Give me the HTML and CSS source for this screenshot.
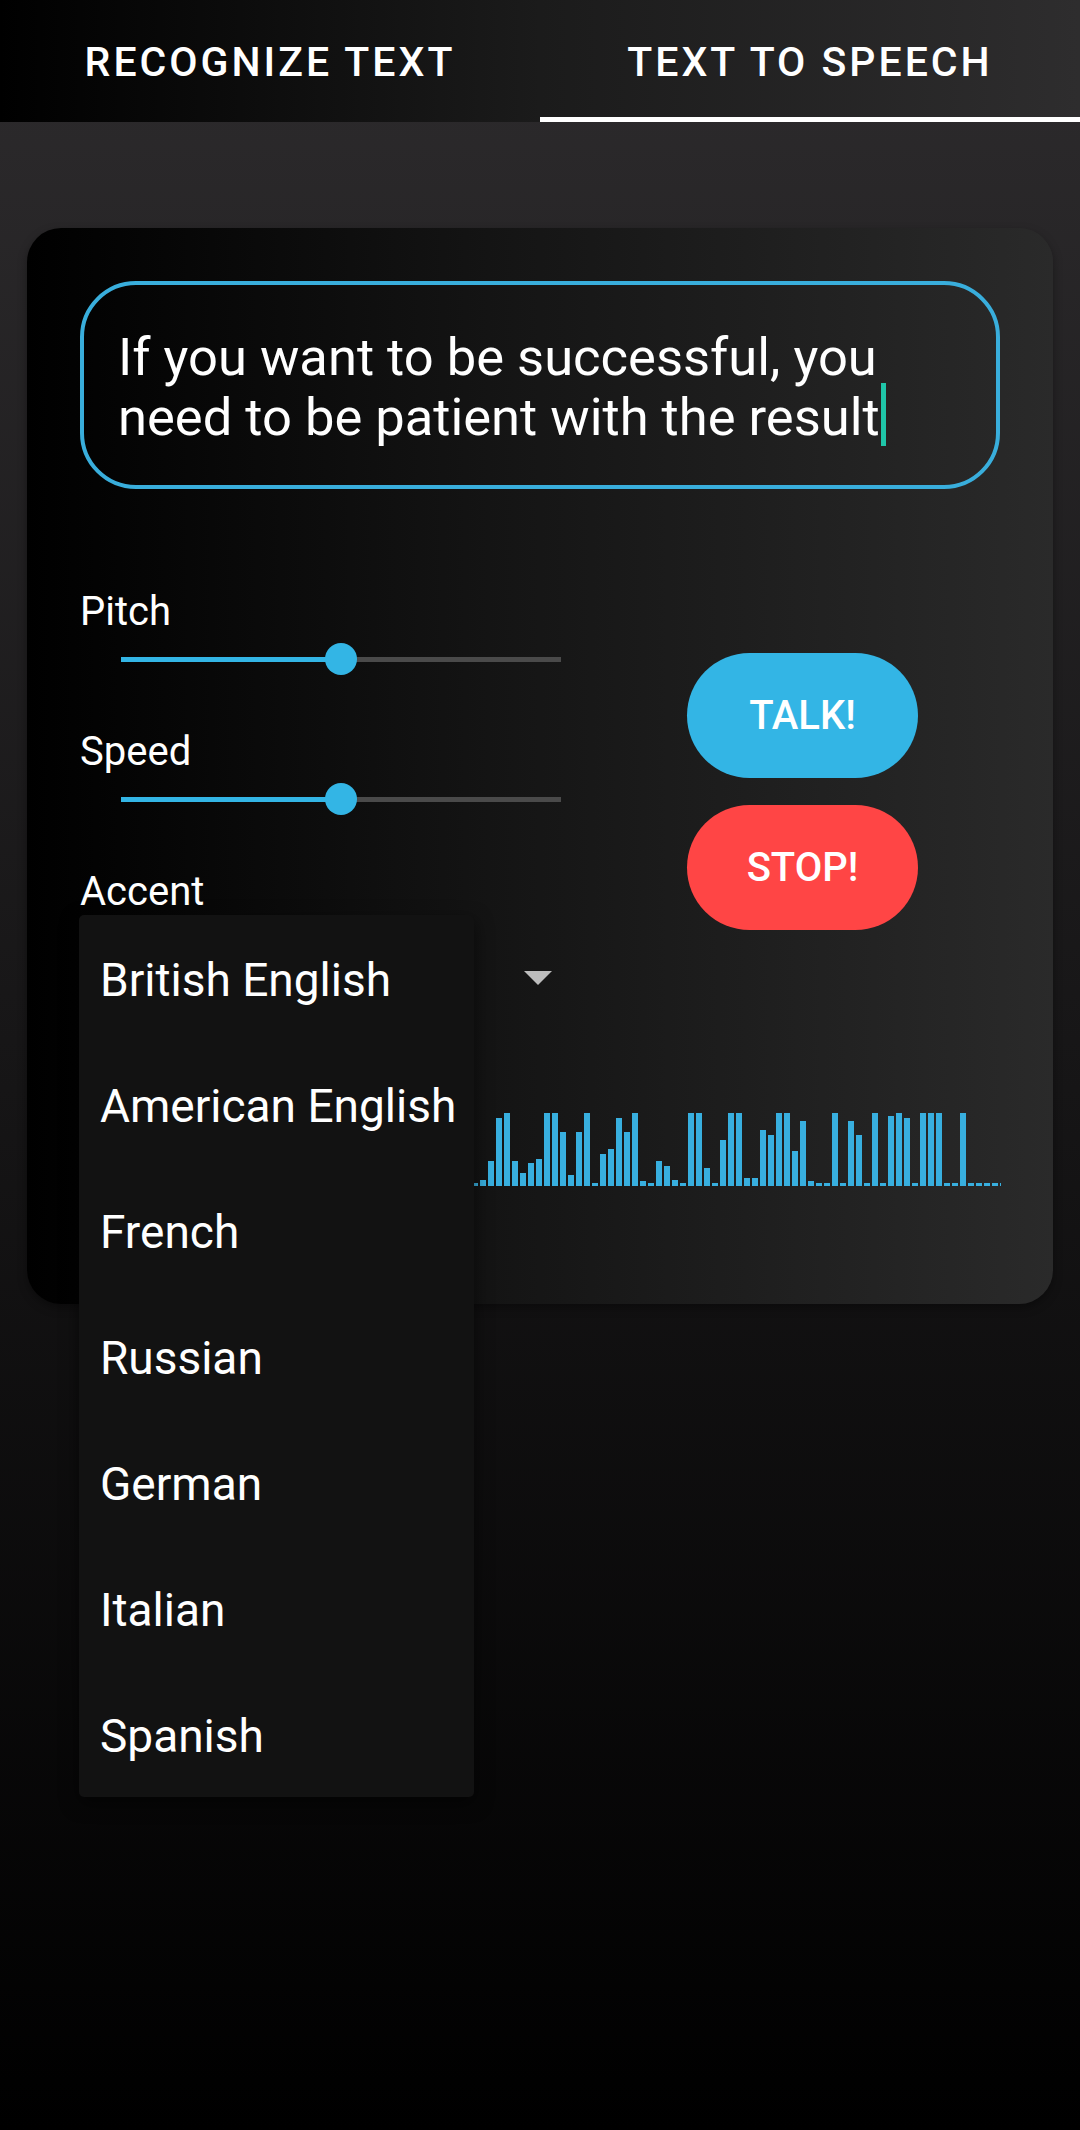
FILE: index.html
```html
<!DOCTYPE html>
<html lang="en">
<head>
<meta charset="utf-8">
<title>Text to Speech</title>
<link rel="stylesheet" href="styles.css">
</head>
<body>
<div class="screen">
  <nav class="tabs">
    <div class="tab">RECOGNIZE TEXT</div>
    <div class="tab active">TEXT TO SPEECH</div>
  </nav>

  <section class="card">
    <div class="input">
      <p class="input-text">If you want to be successful, you need to be patient with the result<span class="cursor"></span></p>
    </div>

    <div class="controls">
      <div class="left">
        <div class="label">Pitch</div>
        <div class="slider">
          <div class="track-on" style="width:220px"></div>
          <div class="thumb"></div>
          <div class="track-off"></div>
        </div>
        <div class="label">Speed</div>
        <div class="slider">
          <div class="track-on" style="width:220px"></div>
          <div class="thumb"></div>
          <div class="track-off"></div>
        </div>
        <div class="label accent-label">Accent</div>
        <div class="spinner">
          <span class="spinner-value">British English</span>
          <svg class="spinner-arrow" width="28" height="14" viewBox="0 0 28 14"><polygon points="0,0 28,0 14,14" fill="#bdbdbd"/></svg>
          <ul class="popup">
            <li>British English</li>
            <li>American English</li>
            <li>French</li>
            <li>Russian</li>
            <li>German</li>
            <li>Italian</li>
            <li>Spanish</li>
          </ul>
        </div>
      </div>
      <div class="right">
        <button class="btn talk">TALK!</button>
        <button class="btn stop">STOP!</button>
      </div>
    </div>

    <div class="wave">
      <span style="height:20px"></span><span style="height:45px"></span><span style="height:12px"></span><span style="height:60px"></span><span style="height:30px"></span><span style="height:3px"></span><span style="height:50px"></span><span style="height:70px"></span><span style="height:25px"></span><span style="height:8px"></span>
      <span style="height:40px"></span><span style="height:73px"></span><span style="height:18px"></span><span style="height:3px"></span><span style="height:55px"></span><span style="height:33px"></span><span style="height:66px"></span><span style="height:10px"></span><span style="height:48px"></span><span style="height:22px"></span>
      <span style="height:3px"></span><span style="height:62px"></span><span style="height:36px"></span><span style="height:73px"></span><span style="height:15px"></span><span style="height:44px"></span><span style="height:3px"></span><span style="height:58px"></span><span style="height:27px"></span><span style="height:68px"></span>
      <span style="height:5px"></span><span style="height:38px"></span><span style="height:73px"></span><span style="height:20px"></span><span style="height:52px"></span><span style="height:3px"></span><span style="height:47px"></span><span style="height:64px"></span><span style="height:12px"></span><span style="height:35px"></span>
      <span style="height:73px"></span><span style="height:26px"></span><span style="height:3px"></span><span style="height:57px"></span><span style="height:41px"></span><span style="height:8px"></span><span style="height:69px"></span><span style="height:30px"></span><span style="height:16px"></span>
      <span style="height:3px"></span><span style="height:6px"></span><span style="height:25px"></span><span style="height:68px"></span><span style="height:73px"></span><span style="height:25px"></span><span style="height:13px"></span><span style="height:23px"></span><span style="height:27px"></span><span style="height:73px"></span>
      <span style="height:73px"></span><span style="height:54px"></span><span style="height:11px"></span><span style="height:54px"></span><span style="height:73px"></span><span style="height:3px"></span><span style="height:32px"></span><span style="height:37px"></span><span style="height:68px"></span><span style="height:54px"></span>
      <span style="height:73px"></span><span style="height:5px"></span><span style="height:3px"></span><span style="height:25px"></span><span style="height:20px"></span><span style="height:6px"></span><span style="height:3px"></span><span style="height:73px"></span><span style="height:73px"></span><span style="height:18px"></span>
      <span style="height:3px"></span><span style="height:46px"></span><span style="height:73px"></span><span style="height:73px"></span><span style="height:8px"></span><span style="height:8px"></span><span style="height:56px"></span><span style="height:51px"></span><span style="height:73px"></span><span style="height:73px"></span>
      <span style="height:35px"></span><span style="height:65px"></span><span style="height:5px"></span><span style="height:3px"></span><span style="height:3px"></span><span style="height:73px"></span><span style="height:3px"></span><span style="height:65px"></span><span style="height:51px"></span><span style="height:3px"></span>
      <span style="height:73px"></span><span style="height:3px"></span><span style="height:70px"></span><span style="height:73px"></span><span style="height:68px"></span><span style="height:3px"></span><span style="height:73px"></span><span style="height:73px"></span><span style="height:73px"></span><span style="height:3px"></span>
      <span style="height:3px"></span><span style="height:73px"></span><span style="height:3px"></span><span style="height:3px"></span><span style="height:3px"></span><span style="height:3px"></span><span style="height:3px"></span>
    </div>
  </section>
</div>
</body>
</html>
```

FILE: styles.css
```css
* {
  box-sizing: border-box;
}

html, body {
  margin: 0;
  padding: 0;
}

body {
  width: 1080px;
  min-height: 2130px;
  background: linear-gradient(180deg, #2d2b2d 0%, #000 100%);
  font-family: Roboto, "Noto Sans", "Liberation Sans", sans-serif;
  color: #fff;
}

.screen {
  width: 1080px;
  min-height: 2130px;
  display: flex;
  flex-direction: column;
}

/* Tabs */
.tabs {
  display: flex;
  height: 122px;
  background: linear-gradient(90deg, #000 0%, #1b1b1b 50%, #2e2d2e 100%);
}

.tab {
  flex: 1;
  display: flex;
  align-items: center;
  justify-content: center;
  font-size: 41px;
  font-weight: 500;
  letter-spacing: 3px;
  padding-top: 2px;
  color: #fff;
}

.tab.active {
  border-bottom: 5px solid #fff;
  padding-top: 7px;
}

/* Card */
.card {
  margin: 106px 27px 0 27px;
  width: 1026px;
  height: 1076px;
  border-radius: 34px;
  background: linear-gradient(90deg, #000 0%, #141414 45%, #2a2a2a 100%);
  padding: 53px 53px 0 53px;
  box-shadow: 0 4px 10px rgba(0, 0, 0, 0.35);
}

.input {
  height: 208px;
  border: 4px solid #39aedc;
  border-radius: 56px;
  padding: 42px 30px 0 34px;
}

.input-text {
  margin: 0;
  font-size: 52.5px;
  line-height: 60px;
  color: #fff;
}

.cursor {
  display: inline-block;
  width: 5px;
  height: 63px;
  background: #1fc6a9;
  vertical-align: -11px;
  margin: -8px 0 0 1px;
}

/* Controls */
.controls {
  display: flex;
  margin-top: 99px;
}

.left {
  width: 481px;
  display: flex;
  flex-direction: column;
}

.label {
  font-size: 40px;
  line-height: 47px;
  height: 47px;
}

.slider {
  height: 48px;
  display: flex;
  align-items: center;
  padding-left: 41px;
  margin-bottom: 45px;
}

.track-on {
  height: 5px;
  background: #33b5e5;
}

.thumb {
  width: 32px;
  height: 32px;
  border-radius: 50%;
  background: #33b5e5;
  margin: 0 -16px;
  position: relative;
  z-index: 1;
}

.track-off {
  flex: 1;
  height: 5px;
  background: #4a4a4a;
}

.accent-label {
  margin-bottom: 0;
}

.spinner {
  position: relative;
  height: 126px;
  display: flex;
  align-items: center;
  justify-content: space-between;
  padding: 0 9px 0 21px;
  font-size: 46px;
}

.spinner-arrow {
  display: block;
}

.popup {
  position: absolute;
  top: 0;
  left: -1px;
  width: 395px;
  margin: 0;
  padding: 0;
  list-style: none;
  background: #121212;
  border-radius: 5px;
  box-shadow: 0 6px 18px rgba(0, 0, 0, 0.55);
  z-index: 10;
}

.popup li {
  height: 126px;
  display: flex;
  align-items: center;
  padding: 3px 0 0 21px;
  font-size: 46px;
  color: #fff;
  white-space: nowrap;
}

.right {
  flex: 1;
  display: flex;
  flex-direction: column;
  align-items: flex-start;
  gap: 27px;
  padding: 65px 0 0 126px;
}

.btn {
  width: 231px;
  height: 125px;
  border: none;
  border-radius: 63px;
  font-family: Roboto, "Noto Sans", "Liberation Sans", sans-serif;
  font-size: 40px;
  font-weight: 500;
  color: #fff;
  padding: 0;
}

.talk {
  background: #33b5e5;
}

.stop {
  background: #ff4545;
}

/* Waveform */
.wave {
  margin-top: 70px;
  width: 921px;
  height: 75px;
  display: flex;
  align-items: flex-end;
  gap: 2.5px;
  overflow: hidden;
}

.wave span {
  flex: 0 0 5.5px;
  background: #38afdf;
}
```
